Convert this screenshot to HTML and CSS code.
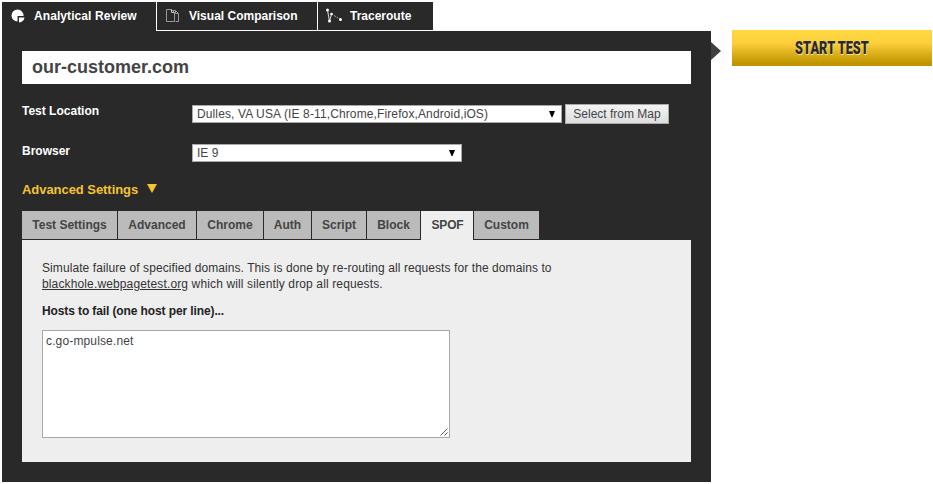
FILE: index.html
```html
<!DOCTYPE html>
<html lang="en">
<head>
<meta charset="utf-8">
<title>Performance Test</title>
<link rel="stylesheet" href="styles.css">
</head>
<body>
<main class="page">
  <section class="form">
    <nav class="modes">
      <a class="mode mode-review active"><svg width="16" height="16" viewBox="0 0 16 16"><path d="M7.500 1.500a6 6 0 1 0 0 12V8h6A6 6 0 0 0 7.500 1.500z" fill="#fff"/><path d="M9 9.500h5.500a5.500 5.500 0 0 1-5.500 5z" fill="#fff"/></svg><span>Analytical Review</span></a>
      <a class="mode mode-visual"><svg width="16" height="16" viewBox="0 0 16 16"><path d="M6.500 3.500V2.500h4l3 3v8h-3M10.500 2.500v3h3" fill="none" stroke="#999"/><path d="M1.500 1.500h5l3 3v9h-8z" fill="#292929" stroke="#999"/><path d="M6.500 1.500v3h3" fill="none" stroke="#ccc"/></svg><span>Visual Comparison</span></a>
      <a class="mode mode-trace"><svg width="16" height="16" viewBox="0 0 16 16"><path d="M1.500 2l2 11.500 2-7.500" fill="none" stroke="#ddd"/><path d="M5.500 6l9 5.500" fill="none" stroke="#aaa" stroke-dasharray="2 1"/><g fill="#fff"><circle cx="1.500" cy="2" r="1.500"/><circle cx="3.500" cy="13" r="1.500"/><circle cx="5.500" cy="6" r="1.300"/><circle cx="14.500" cy="11.500" r="1.500"/></g></svg><span>Traceroute</span></a>
    </nav>
    <div class="panel">
      <div class="url">our-customer.com</div>
      <div class="row row-location">
        <label>Test Location</label>
        <div class="select wide"><span class="location-text">Dulles, VA USA (IE 8-11,Chrome,Firefox,Android,iOS)</span><svg width="6" height="7"><path d="M0 0h6L3.500 6h-1z"/></svg></div>
        <button class="map"><span>Select from Map</span></button>
      </div>
      <div class="row row-browser">
        <label>Browser</label>
        <div class="select"><span>IE 9</span><svg width="6" height="7"><path d="M0 0h6L3.500 6h-1z"/></svg></div>
      </div>
      <div class="advanced"><span>Advanced Settings</span><svg width="10" height="9"><path d="M0 0h10L5 9z" fill="#f5c42c"/></svg></div>
      <nav class="tabs">
        <a class="tab w-settings"><span>Test Settings</span></a>
        <a class="tab w-advanced"><span>Advanced</span></a>
        <a class="tab w-chrome"><span>Chrome</span></a>
        <a class="tab w-auth"><span>Auth</span></a>
        <a class="tab w-script"><span>Script</span></a>
        <a class="tab w-block"><span>Block</span></a>
        <a class="tab w-spof selected"><span>SPOF</span></a>
        <a class="tab w-custom"><span>Custom</span></a>
      </nav>
      <div class="content">
        <p><span class="line-one">Simulate failure of specified domains. This is done by re-routing all requests for the domains to</span><br><span class="line-two"><u>blackhole.webpagetest.org</u> which will silently drop all requests.</span></p>
        <h2><span>Hosts to fail (one host per line)...</span></h2>
        <div class="hosts"><span>c.go-mpulse.net</span><svg class="grip" width="8" height="8"><path d="M0.500 7.500l7-7M4.500 7.500l3-3" stroke="#555"/></svg></div>
      </div>
    </div>
  </section>
  <svg class="pointer" width="10" height="18"><path d="M0 0l10 9L0 18z" fill="#404040"/></svg>
  <button class="start"><span>START TEST</span></button>
</main>
</body>
</html>
```
FILE: styles.css
```css
* { box-sizing: border-box; }
body { margin: 0; background: #fff; font: 12px/16px "Liberation Sans", Arial, sans-serif; color: #333; }
button { font: inherit; margin: 0; padding: 0; }
svg { display: block; flex: none; }
.page { display: flex; align-items: flex-start; width: 933px; height: 484px; padding: 2px 0 0 2px; overflow: hidden; }
.form { width: 709px; }
.modes { display: flex; gap: 1px; height: 29px; }
.mode { display: flex; height: 28px; padding-left: 8px; background: #292929; color: #fff; font-weight: bold; line-height: 28px; white-space: nowrap; }
.mode svg { margin-top: 6px; }
.mode.active { height: 29px; }
.mode span { margin-left: 8px; }
.mode-review { width: 154px; letter-spacing: .08px; }
.mode-visual { width: 160px; }
.mode-trace { width: 115px; }
.panel { height: 451px; padding: 20px 20px 0; background: #292929; }
.url { height: 33px; padding-left: 10px; background: #fff; color: #444; font-size: 18px; font-weight: bold; line-height: 32px; }
.row { display: flex; align-items: flex-start; }
.row label { width: 170px; color: #fff; font-weight: bold; line-height: 14px; }
.row-location { height: 20px; margin-top: 20px; }
.row-browser { height: 18px; margin-top: 20px; }
.select { display: flex; align-items: center; justify-content: space-between; width: 270px; height: 18px; padding: 0 6px 0 4px; border: 1px solid #a9a9a9; background: #fff; color: #444; white-space: nowrap; }
.select.wide { width: 370px; margin-top: 1px; }
.location-text { letter-spacing: .12px; }
.map { width: 104px; height: 20px; margin-left: 3px; border: 1px solid #a9a9a9; background: linear-gradient(#f4f4f4, #ddd); color: #444; line-height: 18px; white-space: nowrap; }
.advanced { display: flex; align-items: flex-start; gap: 9px; height: 16px; margin-top: 20px; color: #f5c42c; font-size: 13px; font-weight: bold; letter-spacing: -.05px; }
.advanced svg { margin-top: 2px; }
.tabs { display: flex; gap: 1px; height: 29px; margin-top: 13px; }
.tab { height: 28px; background: #bbb; color: #444; font-weight: bold; line-height: 28px; text-align: center; white-space: nowrap; }
.tab.selected { height: 29px; background: #eee; }
.w-settings { width: 95px; }
.w-advanced { width: 78px; }
.w-chrome { width: 66px; }
.w-auth { width: 47px; }
.w-script { width: 54px; }
.w-block { width: 53px; }
.w-spof { width: 52px; padding-left: 1px; letter-spacing: -.2px; }
.w-custom { width: 65px; }
.content { height: 222px; padding: 20px; background: #eee; }
.content p { margin: 0; white-space: nowrap; }
.line-one { letter-spacing: .085px; }
.line-two { letter-spacing: .135px; }
.content h2 { margin: 11px 0 0; color: #222; font-size: 12px; line-height: 16px; letter-spacing: -.11px; }
.hosts { display: flex; justify-content: space-between; align-items: flex-end; width: 408px; height: 108px; margin-top: 11px; padding: 2px 1px 1px 3px; border: 1px solid #a9a9a9; background: #fff; color: #444; }
.hosts span { align-self: flex-start; letter-spacing: .14px; }
.pointer { margin-top: 40px; }
.start { width: 200px; height: 36px; margin: 28px 0 0 11px; border: 0; background: linear-gradient(#ffd941 0, #fed03c 35%, #bf9500 92%); color: #292929; font: 900 18px/36px Roboto, sans-serif; text-shadow: 1px 1px 0 #f3e3a5; }
.start span { display: block; transform: scaleX(.71); }
```
